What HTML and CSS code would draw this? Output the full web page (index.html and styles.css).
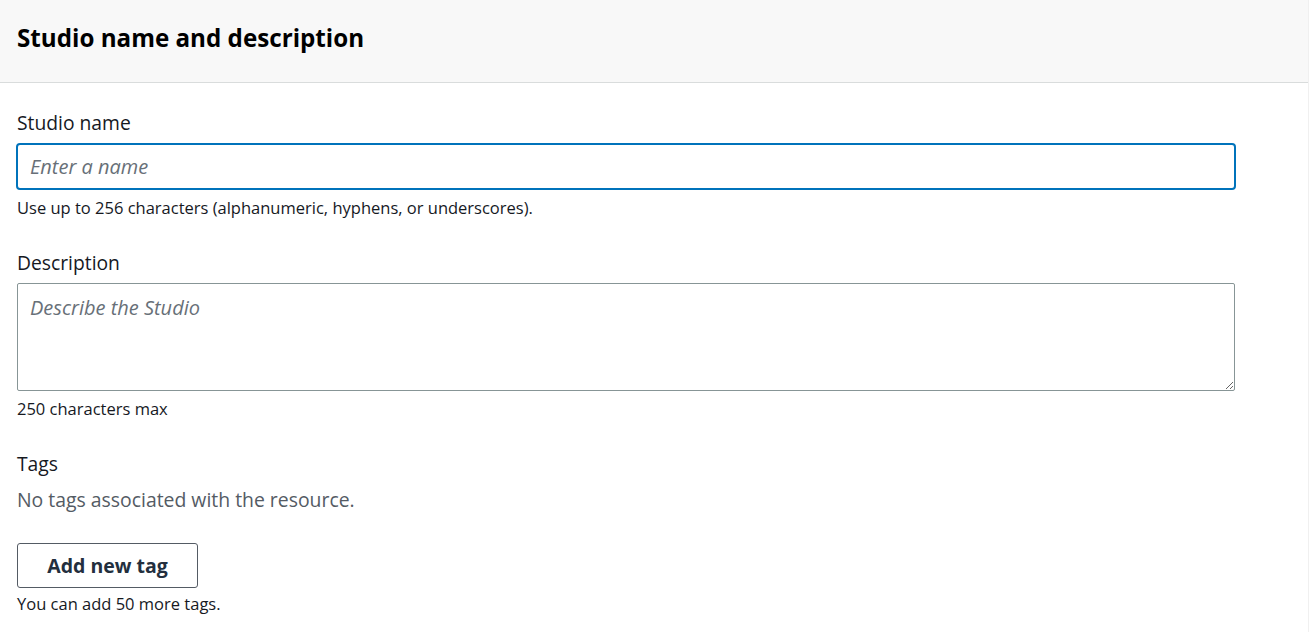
FILE: index.html
```html
<!DOCTYPE html>
<html lang="en">
<head>
    <meta charset="UTF-8">
    <meta name="viewport" content="width=device-width, initial-scale=1.0">
    <title>Studio name and description</title>
    <link rel="stylesheet" href="styles.css">
</head>
<body>
    <div class="panel">
        <div class="panel-header">
            <h2>Studio name and description</h2>
        </div>
        <div class="panel-body">
            <!-- Studio name -->
            <div class="field">
                <label for="studioName">Studio name</label>
                <input type="text" id="studioName" class="name-input" placeholder="Enter a name">
                <p class="hint">Use up to 256 characters (alphanumeric, hyphens, or underscores).</p>
            </div>

            <!-- Description -->
            <div class="field">
                <label for="studioDesc">Description</label>
                <textarea id="studioDesc" placeholder="Describe the Studio"></textarea>
                <p class="hint">250 characters max</p>
            </div>

            <!-- Tags -->
            <div class="field tags">
                <label>Tags</label>
                <p class="empty">No tags associated with the resource.</p>
                <button type="button">Add new tag</button>
                <p class="hint">You can add 50 more tags.</p>
            </div>
        </div>
    </div>
</body>
</html>
```

FILE: styles.css
```css
body {
    margin: 0;
    font-family: "Open Sans", Arial, sans-serif;
    color: #16191f;
    background: #fff;
}
.panel {
    border-right: 1px solid #f0f0f0;
    min-height: 632px;
}
.panel-header {
    box-sizing: border-box;
    background-color: #f8f8f8;
    border-bottom: 1px solid #d9dcdc;
    height: 83px;
    padding: 22px 17px 0;
}
.panel-header h2 {
    margin: 0;
    font-size: 24.2px;
    line-height: 32px;
    font-weight: 700;
    color: #000;
}
.panel-body {
    padding: 26px 72px 0 16px;
}
.field {
    margin-bottom: 30px;
}
label {
    display: block;
    font-size: 19.3px;
    line-height: 28px;
    margin-left: 1px;
    margin-bottom: 6px;
}
.name-input {
    box-sizing: border-box;
    display: block;
    width: 100%;
    height: 47px;
    padding: 0 12px;
    border: 2px solid #0073bb;
    border-radius: 4px;
    font-family: inherit;
    font-size: 20px;
    outline: none;
}
textarea {
    box-sizing: border-box;
    display: block;
    width: calc(100% - 2px);
    margin-left: 1px;
    height: 108px;
    padding: 10px 12px;
    border: 1px solid #879596;
    border-radius: 2px;
    font-family: inherit;
    font-size: 20px;
    resize: vertical;
}
::placeholder {
    color: #687078;
    font-style: italic;
}
.hint {
    margin: 7px 0 0 1px;
    font-size: 16.5px;
    line-height: 22px;
    color: #16191f;
}
.empty {
    margin: 8px 0 0 1px;
    font-size: 19.4px;
    line-height: 28px;
    color: #545b64;
}
button {
    margin: 29px 0 0 1px;
    width: 181px;
    height: 45px;
    background-color: #fff;
    border: 1px solid #545b64;
    border-radius: 3px;
    font-family: inherit;
    font-size: 19.5px;
    font-weight: 700;
    color: #232f3e;
    cursor: pointer;
}
.tags .hint {
    margin-top: 5px;
}
```
